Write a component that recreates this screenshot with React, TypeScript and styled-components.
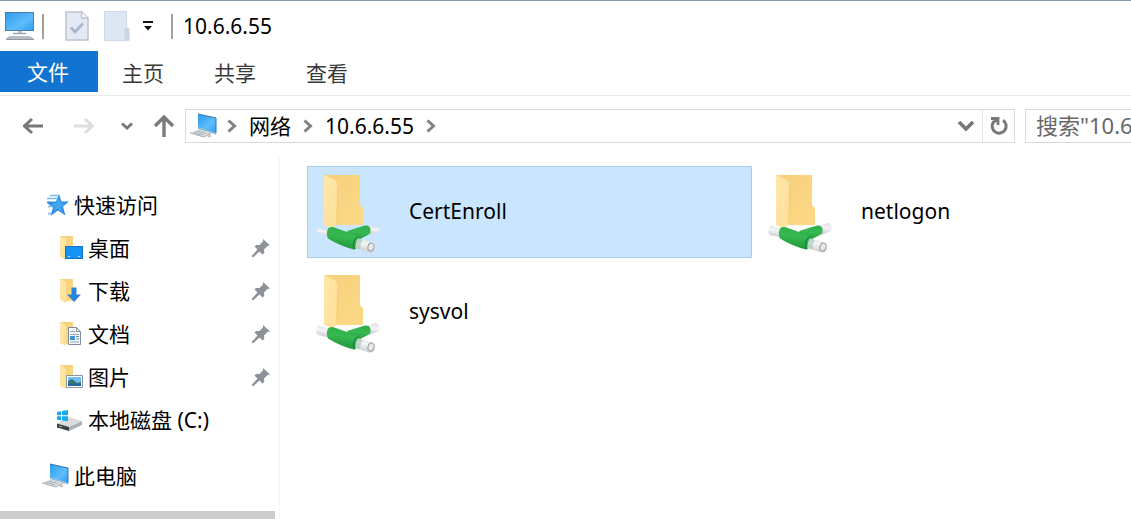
import React from "react";
import styled, { createGlobalStyle } from "styled-components";

const GlobalStyle = createGlobalStyle`
  *, *::before, *::after { box-sizing: border-box; }
  body {
    margin: 0;
    background: #fff;
    color: #000;
    font: 21px/28px "Noto Sans", "Noto Sans CJK SC", sans-serif;
  }
  button, input { font: inherit; color: inherit; }
  svg { display: block; flex: none; }
`;

const Window = styled.div`
  display: flex;
  flex-direction: column;
  min-height: 100vh;
  overflow: hidden;
  border-top: 1px solid #7f9bb5;
`;

const TitleBar = styled.header`
  display: flex;
  align-items: center;
  height: 50px;
  padding-left: 5px;
`;

const Title = styled.h1`
  margin: 0 0 0 10px;
  font-size: 21px;
  font-weight: 400;
  color: #000;
`;

const Divider = styled.span<{ $before: number }>`
  width: 2px;
  height: 25px;
  margin-left: ${(p) => p.$before}px;
  background: #a0a0a0;
`;

const IconButton = styled.button<{ $before?: number }>`
  display: flex;
  align-items: center;
  justify-content: center;
  flex: none;
  margin: 0 0 0 ${(p) => p.$before ?? 0}px;
  padding: 0;
  border: 0;
  background: none;
`;

const Ribbon = styled.nav`
  display: flex;
  height: 45px;
  padding-bottom: 3px;
  border-bottom: 1px solid #e8e8e8;
`;

const Tab = styled.button<{ $active?: boolean }>`
  width: ${(p) => (p.$active ? 98 : 92)}px;
  padding: ${(p) => (p.$active ? 0 : 3)}px 2px 0 0;
  border: 0;
  background: ${(p) => (p.$active ? "#1273d0" : "none")};
  && { color: ${(p) => (p.$active ? "#fff" : "#3a3a3a")}; }
`;

const NavBar = styled.div`
  display: flex;
  align-items: center;
  padding: 13px 0 13px 23px;
`;

const AddressBar = styled.div`
  display: flex;
  align-items: center;
  flex: 1;
  min-width: 0;
  height: 34px;
  margin: 0 10px;
  padding-left: 4px;
  border: 1px solid #d9d9d9;
`;

const Crumb = styled.a`
  margin: 0 12px;
  color: #000;
  text-decoration: none;
  white-space: nowrap;
`;

const AddressActions = styled.div`
  display: flex;
  align-self: stretch;
  margin-left: auto;
`;

const Refresh = styled(IconButton)`
  width: 32px;
  border-left: 1px solid #e4e4e4;
`;

const Search = styled.input`
  flex: 0 0 106px;
  width: 106px;
  height: 34px;
  padding: 0 0 2px 10px;
  border: 1px solid #d9d9d9;
  border-right: 0;
  border-radius: 0;
  outline: 0;
  background: #fff;
  font-size: 22px;
  &::placeholder { color: #686868; opacity: 1; }
`;

const Body = styled.div`
  display: flex;
  flex: 1;
`;

const Sidebar = styled.aside`
  display: flex;
  flex-direction: column;
  flex: 0 0 280px;
  padding: 28px 4px 0 0;
  border-right: 1px solid #f4f4f4;
`;

const Tree = styled.ul`
  flex: 1;
  margin: 0;
  padding: 0;
  list-style: none;
`;

const TreeRow = styled.li<{ $level: number; $gap?: boolean }>`
  display: flex;
  align-items: center;
  height: 43px;
  margin-top: ${(p) => (p.$gap ? 13 : 0)}px;
  padding: 0 5px 2px ${(p) => (p.$level ? 56 : 42)}px;
`;

const TreeLink = styled.a`
  display: flex;
  align-items: center;
  gap: 4px;
  flex: 1;
  color: #000;
  text-decoration: none;
`;

const ScrollThumb = styled.div`
  height: 8px;
  background: #cdcdcd;
`;

const Files = styled.main`
  display: grid;
  flex: 1;
  min-width: 0;
  grid-template-columns: repeat(2, 445px);
  grid-auto-rows: 92px;
  align-content: start;
  gap: 8px 7px;
  padding: 10px 0 0 27px;
  overflow: hidden;
`;

const Tile = styled.button<{ $selected?: boolean }>`
  display: flex;
  align-items: center;
  gap: 29px;
  padding: 3px 8px 0;
  border: 1px solid ${(p) => (p.$selected ? "#a6cfee" : "transparent")};
  background: ${(p) => (p.$selected ? "#cae5fe" : "transparent")};
  text-align: left;
`;

const TileName = styled.span`
  padding-bottom: 5px;
`;

const Gradients = () => (
  <svg width="0" height="0" style={{ position: "absolute" }} aria-hidden="true">
    <defs>
      <linearGradient id="screen" x1="0" y1="0" x2="1" y2="1">
        <stop offset="0" stopColor="#2b9bef" />
        <stop offset="0.6" stopColor="#5fbcfb" />
        <stop offset="1" stopColor="#2f9df2" />
      </linearGradient>
      <linearGradient id="folderBack" x1="0" y1="0" x2="1" y2="1">
        <stop offset="0" stopColor="#f6cf7b" />
        <stop offset="1" stopColor="#fdd987" />
      </linearGradient>
      <linearGradient id="folderFlap" x1="0" y1="0" x2="1" y2="1">
        <stop offset="0" stopColor="#ffe8ac" />
        <stop offset="1" stopColor="#fddf97" />
      </linearGradient>
      <linearGradient id="pipe" x1="0.6" y1="0" x2="0.4" y2="1">
        <stop offset="0" stopColor="#2fae48" />
        <stop offset="0.4" stopColor="#36b950" />
        <stop offset="1" stopColor="#1f9238" />
      </linearGradient>
      <linearGradient id="plug" x1="0.6" y1="0" x2="0.4" y2="1">
        <stop offset="0" stopColor="#dfe1e4" />
        <stop offset="0.4" stopColor="#f3f4f5" />
        <stop offset="1" stopColor="#c4c7ca" />
      </linearGradient>
    </defs>
  </svg>
);

const Monitor = () => (
  <svg width="30" height="29" viewBox="0 0 30 29">
    <rect x="0.5" y="0.5" width="28" height="18" fill="url(#screen)" stroke="#4b7ea6" />
    <path d="M13 19h4v3h-4z" fill="#b8c4cf" />
    <path d="M8 21.5h13" stroke="#93a5b4" strokeWidth="1.4" />
    <path d="M1 27.5q1-3.500 5-3.500h17q4 0 6 3.500z" fill="#b4bcc4" />
    <path d="M1 27.500h28" stroke="#8e979f" />
  </svg>
);

const CheckedPage = () => (
  <svg width="24" height="30" viewBox="0 0 24 30">
    <path d="M1 1h16l6 6v22H1z" fill="#e3eaf5" stroke="#bcc4d2" strokeWidth="1.500" />
    <path d="M16.500 1v6H23" fill="#f4f7fb" stroke="#bcc4d2" strokeWidth="1.300" />
    <path d="M6 16.500l4 4.500 8-8.500" fill="none" stroke="#abb6c9" strokeWidth="2.800" />
  </svg>
);

const PaleFolder = () => (
  <svg width="26" height="30" viewBox="0 0 26 30">
    <path d="M.5.500h22V16l2.500 2v11.500H.5z" fill="#dde6f3" stroke="#ccd7e6" />
    <path d="M20.500 29V17h2.500l2 2v10z" fill="#c9d4e4" />
  </svg>
);

const DropMark = () => (
  <svg width="12" height="12" viewBox="0 0 12 12">
    <path d="M1 2h10" stroke="#111" strokeWidth="2" />
    <path d="M2 6h8l-4 4.500z" fill="#111" />
  </svg>
);

const Arrow = ({ color, flip }: { color: string; flip?: boolean }) => (
  <svg width="20" height="18" viewBox="0 0 20 18">
    <path
      d={flip ? "M0 9h18M11 2l7.500 7-7.500 7" : "M20 9H2M9 2L1.500 9 9 16"}
      fill="none"
      stroke={color}
      strokeWidth="3"
    />
  </svg>
);

const UpArrow = () => (
  <svg width="22" height="22" viewBox="0 0 22 22">
    <path d="M11 22V3M2 11l9-9 9 9" fill="none" stroke="#7c7c7c" strokeWidth="3.400" />
  </svg>
);

const DownChevron = ({ large }: { large?: boolean }) => (
  <svg width={large ? 18 : 12} height={large ? 12 : 8} viewBox={large ? "0 0 18 12" : "0 0 12 8"}>
    <path
      d={large ? "M2 2l7 7 7-7" : "M1 1.500l5 4.500 5-4.500"}
      fill="none"
      stroke="#777"
      strokeWidth={large ? 3.6 : 2.8}
    />
  </svg>
);

const RightChevron = () => (
  <svg width="10" height="14" viewBox="0 0 10 14">
    <path d="M1.500 1.500L7.500 7l-6 5.500" fill="none" stroke="#808080" strokeWidth="3" />
  </svg>
);

const RefreshMark = () => (
  <svg width="20" height="20" viewBox="0 0 20 20">
    <path d="M14 4.300A7 7 0 1 1 4.500 6L8 3.500" fill="none" stroke="#777" strokeWidth="3" />
    <path d="M2 2.500h7v6.500" fill="none" stroke="#777" strokeWidth="2.800" />
  </svg>
);

const Computer = () => (
  <svg width="28" height="26" viewBox="0 0 28 26">
    <path d="M8 1l18 4v15L8 14.500z" fill="url(#screen)" />
    <path d="M8 1l18 4v15" fill="none" stroke="#3375ac" strokeWidth="1" />
    <path d="M8 14.500L26 20v1.500L8 16z" fill="#8db2cf" />
    <path d="M14 18l6 1.500v3l-6-1z" fill="#cbd1d6" />
    <path d="M0 19.500l9-3 12 3-7 4z" fill="#d8dcdf" />
    <path d="M0 19.500l14 4 7-4v1l-7 4-14-4z" fill="#a4abb1" />
    <path d="M4 19.500l9 2.500M7 18.300l9 2.400M3.500 20.300l7-2.500M8 21.500l6-3" stroke="#a9b0b6" strokeWidth=".8" />
    <path d="M17 23l3-1 2 1-3 1.500z" fill="#b9bec3" />
  </svg>
);

const Star = () => (
  <svg width="28" height="24" viewBox="0 0 28 24">
    <path d="M17 1l2.500 7.500H27l-6 5 2.500 9L16 17.500 8.500 23l2.500-8.500L5 10l0-1.500 9 0z" fill="#2f8ee2" />
    <path d="M16.500 4l2 6 5 .5-4.500 3.500 1.500 5-5-3.500-4 2.500 1.500-4-4-3.500 5.500-.5z" fill="#46a7f0" />
    <path d="M8 2.500h8.500M5 5.500h10M6 13.500h5M6 20.500h4" stroke="#76b9ef" strokeWidth="1.500" />
  </svg>
);

type Badge = "desktop" | "download" | "document" | "picture";

const SmallFolder = ({ badge }: { badge: Badge }) => (
  <svg width="28" height="26" viewBox="0 0 28 26">
    <path d="M4 1h13v10l1.500 1v11H9z" fill="url(#folderBack)" />
    <path d="M4 1l6 3v21l-6-3z" fill="url(#folderFlap)" />
    {badge === "desktop" && (
      <>
        <rect x="9.500" y="11.500" width="17" height="12" fill="#1593f5" stroke="#1176c7" />
        <path d="M12 21.500h2M22 21.500h2" stroke="#b8e1ff" />
      </>
    )}
    {badge === "download" && (
      <path d="M15.500 9.500h5v7h4.500L18 24l-7-7.500h4.500z" fill="#2b83dc" />
    )}
    {badge === "document" && (
      <>
        <path d="M12.500 6.500h8l4 4v13h-12z" fill="#f7fafc" stroke="#7f8b96" />
        <path d="M20.500 6.500v4h4" fill="none" stroke="#7f8b96" />
        <path d="M14 10.500h5M14 13.500h9M14 21h9" stroke="#93a7b9" />
        <path d="M14 15h5v4h-5z" fill="#3f91d2" />
        <path d="M20 15.500h3M20 18h3" stroke="#5b89b0" />
      </>
    )}
    {badge === "picture" && (
      <>
        <path d="M10.500 11.500h16v12h-16z" fill="#fff" stroke="#8d98a3" />
        <path d="M12 13h13v9H12z" fill="#71bdf0" />
        <path d="M12 17l4-2 5 4 4-1v4H12z" fill="#35737c" />
        <path d="M12 20l6 .5 7-.5v2H12z" fill="#2464a0" />
      </>
    )}
  </svg>
);

const Drive = () => (
  <svg width="28" height="24" viewBox="0 0 28 24">
    <path d="M1 16l10-7.500L26 13l-13 6z" fill="#d9dbdd" />
    <path d="M1 15.500L13 19v4L1 19.500z" fill="#3b3e41" />
    <path d="M13 19l13-6v4l-13 6z" fill="#aeb1b4" />
    <path d="M3 18l3 1" stroke="#80d18f" />
    <path d="M1 4l4-.7v4H1zM6 3l6-1v5.300H6zM1 8.300h4v4l-4-.6zM6 8.300h6v5l-6-.8z" fill="#13aeea" />
  </svg>
);

const Pin = () => (
  <svg width="18" height="18" viewBox="0 0 18 18">
    <path
      d="M11 0l7 6.500-2.500.5-3.500 3.500 .3 3.500-1.800 1.500L7.500 12.500l-6 5.500H0v-1.500L5.500 10.500 2.500 7.500 4 6l3.500 0 3.500-3.500z"
      fill="#8d9299"
    />
  </svg>
);

const NetworkFolder = ({ muted }: { muted?: boolean }) => (
  <svg width="64" height="78" viewBox="0 0 64 78">
    <path d="M8 0h36v30l3 3v17H19z" fill="url(#folderBack)" />
    <path d="M8 0l9 4q4.500 2 4.500 8l-1 37q-3 5-6 4L8 50z" fill="url(#folderFlap)" />
    <path d="M21.500 12l-.5 36" stroke="#f0c874" strokeWidth=".8" />
    <path
      d={muted ? "M0 55l2-2 10 2.500v6l-9-3.500z" : "M2.500 50.500l10.500 3v9L2 60q-4-4 .5-9.500z"}
      fill="url(#plug)"
    />
    <path
      d={muted ? "M52 51.500l8-.5 4 3-1 2-9 4z" : "M50 51l10-3q4.500 1.500 3.500 8L53 60z"}
      fill="url(#plug)"
    />
    <path d="M31 56l18-5.500q5-.5 5.500 4 .5 4-2.500 5.500L38 67z" fill="url(#pipe)" />
    <path d="M12.500 53q3-1.500 6-.5l21 7.500q3.500 2 2.500 9-1 4.500-4 5.500Q24 71 12 63.500q-2.500-5.500.5-10.500z" fill="url(#pipe)" />
    <path d="M41.500 62q-3.500 2-4 7 0 4 1.500 5.200" fill="none" stroke="#1b7f3e" strokeWidth="1.200" />
    <path d="M42 63.500l14 3.500q3.500 1 3 6-1 5-5.500 4.500L39.500 73q0-6 2.500-9.500z" fill="url(#plug)" />
    <path d="M42 63.500l5 1.300q-3 4-2.500 9.700l-5-1.500q0-6 2.500-9.500z" fill="#a9cdb8" opacity=".7" />
    <ellipse cx="55" cy="72" rx="3" ry="4" transform="rotate(15 55 72)" fill="#e6e8e9" stroke="#979c9f" />
  </svg>
);

const pinned: { label: string; badge: Badge }[] = [
  { label: "桌面", badge: "desktop" },
  { label: "下载", badge: "download" },
  { label: "文档", badge: "document" },
  { label: "图片", badge: "picture" },
];

const shares = ["CertEnroll", "netlogon", "sysvol"];

export default function App() {
  return (
    <Window>
      <GlobalStyle />
      <Gradients />
      <TitleBar>
        <Monitor />
        <Divider $before={7} />
        <IconButton $before={21} aria-label="属性"><CheckedPage /></IconButton>
        <IconButton $before={15} aria-label="新建文件夹"><PaleFolder /></IconButton>
        <IconButton $before={12} aria-label="自定义快速访问工具栏"><DropMark /></IconButton>
        <Divider $before={17} />
        <Title>10.6.6.55</Title>
      </TitleBar>
      <Ribbon>
        <Tab $active>文件</Tab>
        <Tab>主页</Tab>
        <Tab>共享</Tab>
        <Tab>查看</Tab>
      </Ribbon>
      <NavBar>
        <IconButton aria-label="后退"><Arrow color="#777" /></IconButton>
        <IconButton $before={31} aria-label="前进"><Arrow color="#dedede" flip /></IconButton>
        <IconButton $before={27} aria-label="最近的位置"><DownChevron /></IconButton>
        <IconButton $before={20} aria-label="向上"><UpArrow /></IconButton>
        <AddressBar>
          <Computer />
          <IconButton $before={9} aria-label="展开"><RightChevron /></IconButton>
          <Crumb href="#network">网络</Crumb>
          <RightChevron />
          <Crumb href="#host">10.6.6.55</Crumb>
          <RightChevron />
          <AddressActions>
            <IconButton aria-label="以前的位置"><DownChevron large /></IconButton>
            <Refresh $before={7} aria-label="刷新"><RefreshMark /></Refresh>
          </AddressActions>
        </AddressBar>
        <Search type="text" aria-label="搜索" placeholder={'搜索"10.6.6.55"'} />
      </NavBar>
      <Body>
        <Sidebar>
          <Tree>
            <TreeRow $level={0}><TreeLink href="#quick"><Star />快速访问</TreeLink></TreeRow>
            {pinned.map((item) => (
              <TreeRow key={item.label} $level={1}>
                <TreeLink href={`#${item.badge}`}><SmallFolder badge={item.badge} />{item.label}</TreeLink>
                <Pin />
              </TreeRow>
            ))}
            <TreeRow $level={1}><TreeLink href="#drive"><Drive />本地磁盘 (C:)</TreeLink></TreeRow>
            <TreeRow $level={0} $gap><TreeLink href="#computer"><Computer />此电脑</TreeLink></TreeRow>
          </Tree>
          <ScrollThumb />
        </Sidebar>
        <Files>
          {shares.map((name, i) => (
            <Tile key={name} $selected={i === 0}>
              <NetworkFolder muted={i === 0} />
              <TileName>{name}</TileName>
            </Tile>
          ))}
        </Files>
      </Body>
    </Window>
  );
}
